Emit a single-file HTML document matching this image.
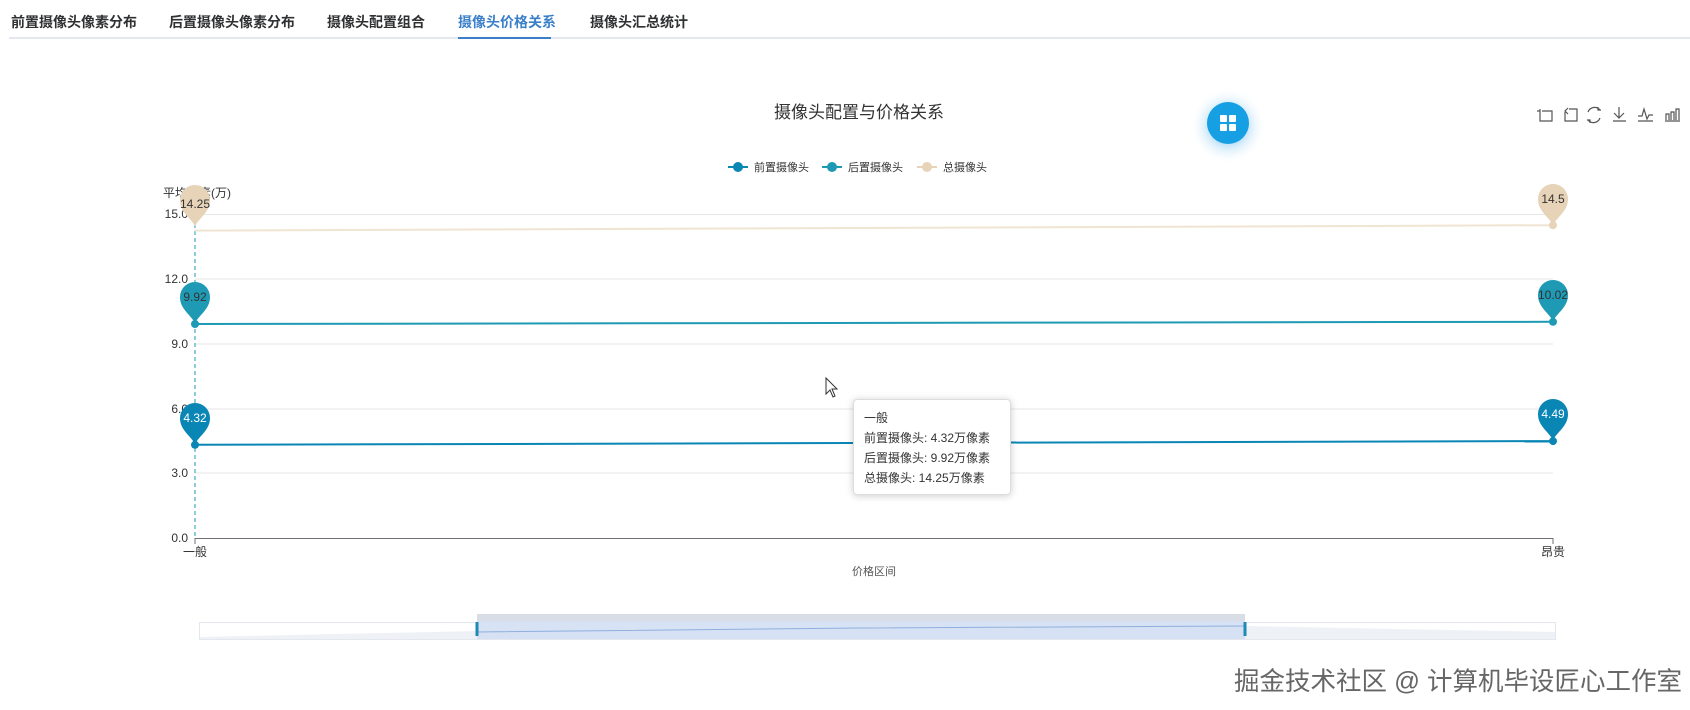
<!DOCTYPE html>
<html><head><meta charset="utf-8"><style>
body{margin:0;width:1690px;height:710px;background:#fff;overflow:hidden;font-family:"Liberation Sans","Noto Sans CJK SC",sans-serif;position:relative}
.tab{position:absolute;top:12px;font-size:14px;color:#303133;font-weight:bold}
</style></head><body>
<div class="tab" style="left:11px">前置摄像头像素分布</div>
<div class="tab" style="left:169px">后置摄像头像素分布</div>
<div class="tab" style="left:327px">摄像头配置组合</div>
<div class="tab" style="left:458px;color:#3a7fc8">摄像头价格关系</div>
<div class="tab" style="left:590px">摄像头汇总统计</div>
<div style="position:absolute;left:9px;right:0;top:37px;height:2px;background:#e4e7ed"></div>
<div style="position:absolute;left:458px;width:93px;top:37px;height:2px;background:#3a7fc8"></div>

<svg width="1690" height="710" style="position:absolute;left:0;top:0" font-family="Liberation Sans, Noto Sans CJK SC, sans-serif">
<defs><radialGradient id="gl"><stop offset="0.5" stop-color="#9fd4f5" stop-opacity="0.6"/><stop offset="1" stop-color="#fff" stop-opacity="0"/></radialGradient></defs>
<text x="859" y="118" font-size="17" text-anchor="middle" fill="#333">摄像头配置与价格关系</text>
<circle cx="1228" cy="126" r="38" fill="url(#gl)"/>
<circle cx="1228" cy="123" r="21" fill="#16a0e3"/>
<g fill="#fff"><rect x="1220" y="115" width="7" height="7" rx="1"/><rect x="1229" y="115" width="7" height="7" rx="1"/><rect x="1220" y="124" width="7" height="7" rx="1"/><rect x="1229" y="124" width="7" height="7" rx="1"/></g>
<g stroke="#555" stroke-width="1.2" fill="none">
<path d="M1540 109v12h12v-10h-10M1537 111h3"/>
<path d="M1565 112v9h12v-12h-8M1568 108l-3 3 3 3"/>
<path d="M1588 112a7 7 0 0 1 12-2M1600 118a7 7 0 0 1-12 2M1598 107v3h3M1590 123v-3h-3"/>
<path d="M1619 107v11M1614 113l5 5 5-5M1613 121h13"/>
<path d="M1638 116h4l2-7 3 10 2-4h4M1638 121h15"/>
<path d="M1665 121h15M1666 120v-6h3v6M1671 120v-8h3v8M1676 120v-11h3v11"/>
</g>
<g font-size="11" fill="#333">
<line x1="728" y1="167" x2="748" y2="167" stroke="#0a86b5" stroke-width="2"/><circle cx="738" cy="167" r="5" fill="#0a86b5"/><text x="754" y="171">前置摄像头</text>
<line x1="822" y1="167" x2="842" y2="167" stroke="#1e9ab5" stroke-width="2"/><circle cx="832" cy="167" r="5" fill="#1e9ab5"/><text x="848" y="171">后置摄像头</text>
<line x1="917" y1="167" x2="937" y2="167" stroke="#e6d3b8" stroke-width="2"/><circle cx="927" cy="167" r="5" fill="#e6d3b8"/><text x="943" y="171">总摄像头</text>
</g>
<text x="163" y="197" font-size="12" fill="#333">平均像素(万)</text>
<g stroke="#e6e6e6" stroke-width="1">
<line x1="195" y1="214.5" x2="1553" y2="214.5"/><line x1="195" y1="279" x2="1553" y2="279"/><line x1="195" y1="344" x2="1553" y2="344"/><line x1="195" y1="409" x2="1553" y2="409"/><line x1="195" y1="473" x2="1553" y2="473"/>
</g>
<line x1="195" y1="538.5" x2="1553" y2="538.5" stroke="#6e7079"/>
<line x1="195" y1="538" x2="195" y2="544" stroke="#6e7079"/><line x1="1553" y1="538" x2="1553" y2="544" stroke="#6e7079"/>
<g font-size="12" fill="#333" text-anchor="end">
<text x="188" y="218">15.0</text><text x="188" y="283">12.0</text><text x="188" y="348">9.0</text><text x="188" y="413">6.0</text><text x="188" y="477">3.0</text><text x="188" y="542">0.0</text>
</g>
<g font-size="12" fill="#333" text-anchor="middle"><text x="195" y="556">一般</text><text x="1553" y="556">昂贵</text><text x="874" y="575" font-size="11" fill="#555">价格区间</text></g>
<line x1="195" y1="210" x2="195" y2="538" stroke="#1e9ab5" stroke-dasharray="4,3"/>
<line x1="195" y1="230.6" x2="1553" y2="225.2" stroke="#f0e4d2" stroke-width="2"/>
<line x1="195" y1="324" x2="1553" y2="321.8" stroke="#1e9ab5" stroke-width="2"/>
<line x1="195" y1="444.8" x2="1553" y2="441.1" stroke="#0a86b5" stroke-width="2"/>
<circle cx="1553" cy="225.2" r="4" fill="#e6d3b8"/>
<circle cx="195" cy="324" r="4" fill="#1e9ab5"/><circle cx="1553" cy="321.8" r="4" fill="#1e9ab5"/>
<circle cx="195" cy="444.8" r="4" fill="#0a86b5"/><circle cx="1553" cy="441.1" r="4" fill="#0a86b5"/>
<g font-size="12" text-anchor="middle">
<path transform="translate(195,226)" d="M0,0 C-5,-9 -15,-14 -15,-26 A15,15 0 1,1 15,-26 C15,-14 5,-9 0,0Z" fill="#e6d3b8"/><text x="195" y="208" fill="#333">14.25</text>
<path transform="translate(1553,225)" d="M0,0 C-5,-9 -15,-14 -15,-26 A15,15 0 1,1 15,-26 C15,-14 5,-9 0,0Z" fill="#e6d3b8"/><text x="1553" y="203" fill="#333">14.5</text>
<path transform="translate(195,323)" d="M0,0 C-5,-9 -15,-14 -15,-26 A15,15 0 1,1 15,-26 C15,-14 5,-9 0,0Z" fill="#1e9ab5"/><text x="195" y="301" fill="#333">9.92</text>
<path transform="translate(1553,321)" d="M0,0 C-5,-9 -15,-14 -15,-26 A15,15 0 1,1 15,-26 C15,-14 5,-9 0,0Z" fill="#1e9ab5"/><text x="1553" y="299" fill="#333">10.02</text>
<path transform="translate(195,444)" d="M0,0 C-5,-9 -15,-14 -15,-26 A15,15 0 1,1 15,-26 C15,-14 5,-9 0,0Z" fill="#0a86b5"/><text x="195" y="422" fill="#fff">4.32</text>
<path transform="translate(1553,440)" d="M0,0 C-5,-9 -15,-14 -15,-26 A15,15 0 1,1 15,-26 C15,-14 5,-9 0,0Z" fill="#0a86b5"/><text x="1553" y="418" fill="#fff">4.49</text>
</g>
<rect x="199.5" y="622.5" width="1356" height="17" fill="#fff" stroke="#e4e8ee"/>
<path d="M200 637 L477 631 L1245 626 L1555 632 L1555 639 L200 639Z" fill="#eef1f5"/>
<rect x="477" y="614" width="768" height="25" fill="#d3dff3" opacity="0.9"/>
<rect x="477" y="614" width="768" height="7" fill="#d8dde6"/>
<path d="M477 632 L860 628 L1245 626" stroke="#8fb0dd" fill="none"/>
<rect x="475.5" y="622" width="3" height="14" fill="#1e8ab5"/><rect x="1243.5" y="622" width="3" height="14" fill="#1e8ab5"/>
<path d="M826 378 L826 394 L830 390 L833 397 L835 396 L832 389 L837 389Z" fill="#fff" stroke="#333"/>
</svg>
<div style="position:absolute;left:853px;top:399px;width:158px;height:96px;background:#fff;border:1px solid #ddd;border-radius:4px;box-shadow:0 1px 8px rgba(0,0,0,.2);font-size:12px;color:#333;line-height:20px;padding:8px 10px;box-sizing:border-box">一般<br>前置摄像头: 4.32万像素<br>后置摄像头: 9.92万像素<br>总摄像头: 14.25万像素</div>
<div style="position:absolute;left:1234px;top:661px;font-size:25.5px;color:#666;text-shadow:0 0 2px #fff,0 0 2px #fff;white-space:nowrap">掘金技术社区 @ 计算机毕设匠心工作室</div>
</body></html>
